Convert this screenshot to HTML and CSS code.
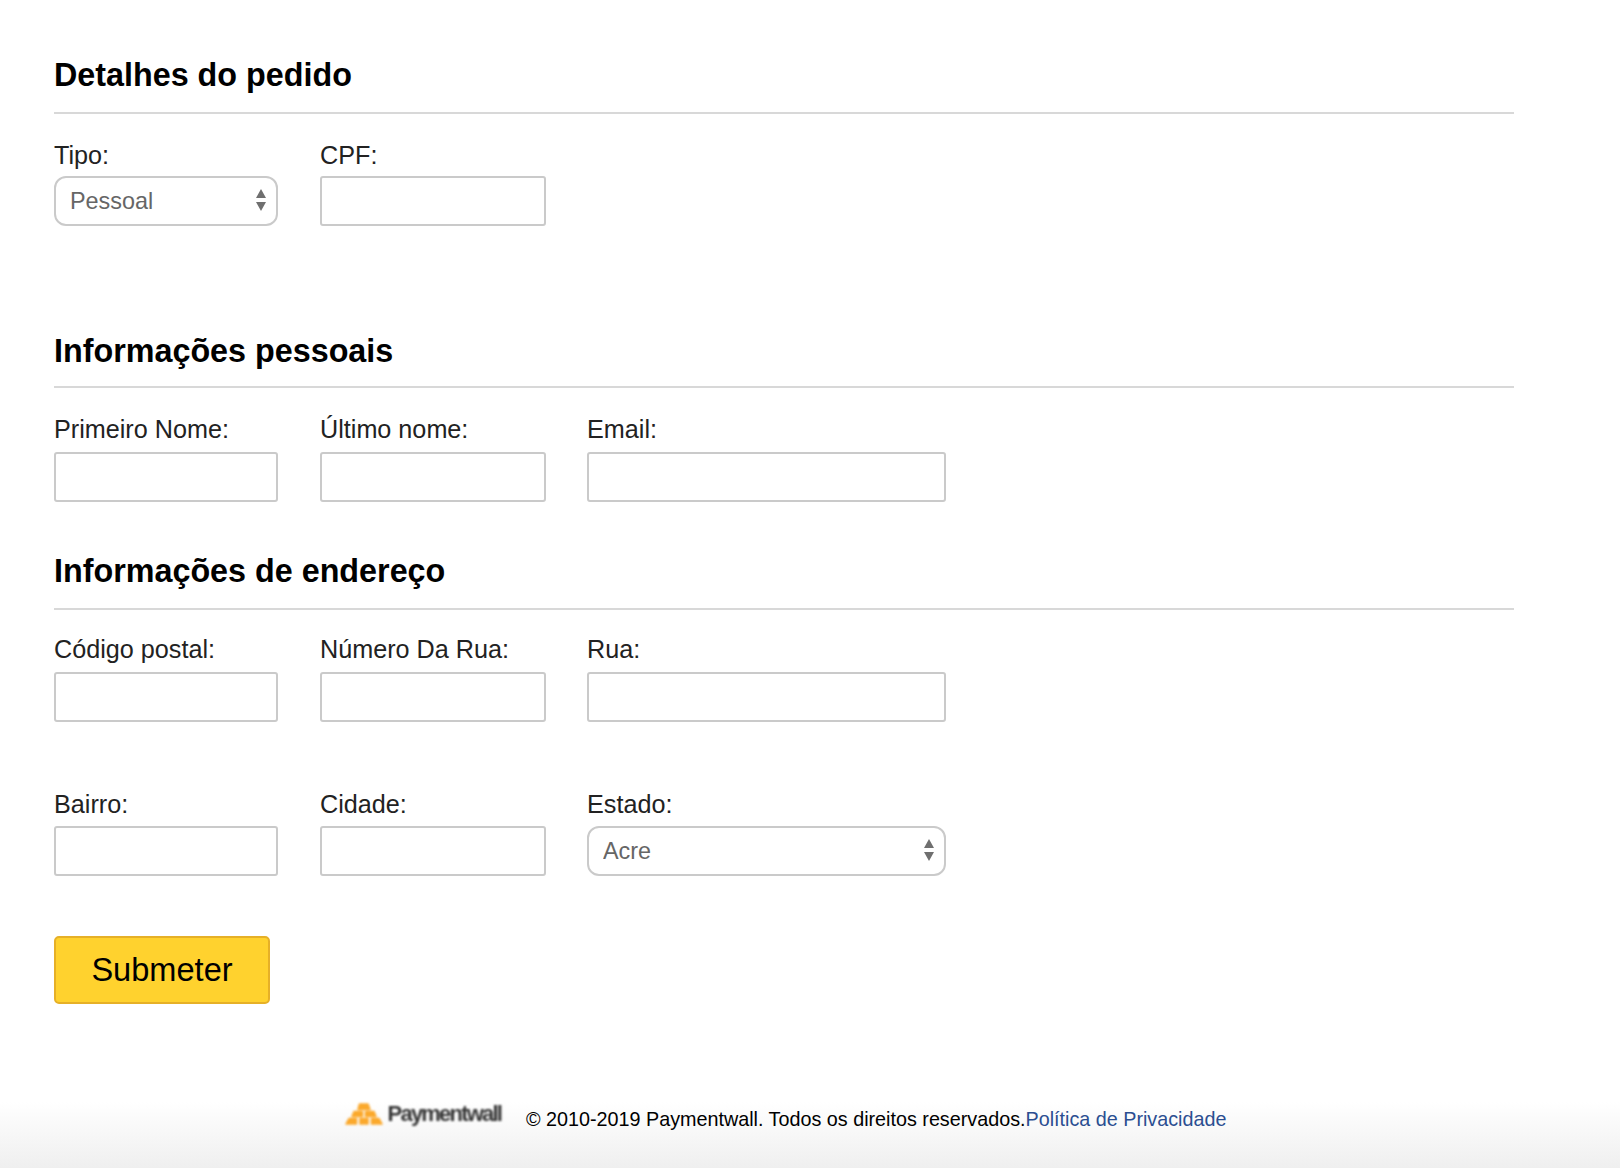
FILE: index.html
```html
<!DOCTYPE html>
<html lang="pt">
<head>
  <meta charset="UTF-8" />
  <title>Detalhes do pedido</title>
  <link rel="stylesheet" href="styles.css">
</head>
<body>

  <form class="order-form">
    <section class="details">
      <h2>Detalhes do pedido</h2>
      <div class="row">
        <div class="field small">
          <label for="tipo">Tipo:</label>
          <div class="select-wrap">
            <select id="tipo"><option>Pessoal</option></select>
            <svg class="arrows" width="12" height="24" viewBox="0 0 12 24"><path d="M6 1 L11 10 L1 10 Z M1 14 L11 14 L6 23 Z" fill="#6f6f6f"/></svg>
          </div>
        </div>
        <div class="field small second">
          <label for="cpf">CPF:</label>
          <input id="cpf" type="text">
        </div>
      </div>
    </section>

    <section class="personal">
      <h2>Informações pessoais</h2>
      <div class="row">
        <div class="field small">
          <label for="nome">Primeiro Nome:</label>
          <input id="nome" type="text">
        </div>
        <div class="field small second">
          <label for="sobrenome">Último nome:</label>
          <input id="sobrenome" type="text">
        </div>
        <div class="field wide">
          <label for="email">Email:</label>
          <input id="email" type="text">
        </div>
      </div>
    </section>

    <section class="address">
      <h2>Informações de endereço</h2>
      <div class="row">
        <div class="field small">
          <label for="cep">Código postal:</label>
          <input id="cep" type="text">
        </div>
        <div class="field small second">
          <label for="numero">Número Da Rua:</label>
          <input id="numero" type="text">
        </div>
        <div class="field wide">
          <label for="rua">Rua:</label>
          <input id="rua" type="text">
        </div>
      </div>
      <div class="row next">
        <div class="field small">
          <label for="bairro">Bairro:</label>
          <input id="bairro" type="text">
        </div>
        <div class="field small second">
          <label for="cidade">Cidade:</label>
          <input id="cidade" type="text">
        </div>
        <div class="field wide">
          <label for="estado">Estado:</label>
          <div class="select-wrap">
            <select id="estado"><option>Acre</option></select>
            <svg class="arrows" width="12" height="24" viewBox="0 0 12 24"><path d="M6 1 L11 10 L1 10 Z M1 14 L11 14 L6 23 Z" fill="#6f6f6f"/></svg>
          </div>
        </div>
      </div>
    </section>

    <button class="btn" type="button">Submeter</button>
  </form>

  <footer class="footer">
    <div class="brand">
      <svg class="logo" width="38" height="22" viewBox="0 0 38 22">
        <g fill="#fba92c" stroke="#fba92c" stroke-width="1.5" stroke-linejoin="round">
          <path d="M14.5 1 H23 L25 6.5 H13 Z"/>
          <path d="M9 8.5 H17.5 L17.5 13.5 H7 Z"/>
          <path d="M20.5 8.5 H29 L31 13.5 H20.5 Z"/>
          <path d="M4 15.5 H11.5 L11.5 21 H1 Z"/>
          <path d="M15 15.5 H23 L23 21 H15 Z"/>
          <path d="M26.5 15.5 H34 L37 21 H26.5 Z"/>
        </g>
      </svg>
      <span class="brand-name">Paymentwall</span>
    </div>
    <p class="copy">© 2010-2019 Paymentwall. Todos os direitos reservados.<a href="#">Política de Privacidade</a></p>
  </footer>

</body>
</html>
```

FILE: styles.css
```css
* {
  box-sizing: border-box;
}

html, body {
  height: 100%;
}

body {
  margin: 0;
  font-family: "Liberation Sans", Arial, sans-serif;
  color: #222;
  background: #fff;
  display: flex;
  flex-direction: column;
  min-height: 1168px;
}

.order-form {
  padding: 52px 0 0 54px;
  width: 1514px;
  flex: 1;
}

h2 {
  margin: 0;
  font-size: 32.3px;
  line-height: 46px;
  font-weight: bold;
  color: #000;
  border-bottom: 2px solid #d8d8d8;
  padding-bottom: 14px;
}

.row {
  display: flex;
  margin-top: 24px;
}

.row.next {
  margin-top: 67px;
}

.field {
  display: flex;
  flex-direction: column;
  margin-right: 42px;
}

.field.small {
  width: 224px;
}

.field.second {
  width: 226px;
  margin-right: 41px;
}

.field.wide {
  width: 359px;
  margin-right: 0;
}

label {
  font-size: 25.2px;
  line-height: 30px;
  margin-bottom: 8px;
}

.row.next label {
  margin-bottom: 7px;
}

input, select {
  width: 100%;
  height: 50px;
  border: 2px solid #cacaca;
  background: #fff;
  font-family: inherit;
  font-size: 23.4px;
  color: #666;
}

input {
  border-radius: 3px;
  padding: 0 14px;
}

select {
  appearance: none;
  border-radius: 12px;
  padding: 0 14px;
}

.select-wrap {
  position: relative;
}

.arrows {
  position: absolute;
  right: 11px;
  top: 12px;
}

.details {
  height: 276px;
}

.details .row {
  margin-top: 26px;
}

.details label {
  margin-bottom: 6px;
}

.personal {
  height: 220px;
}

.personal h2 {
  padding-bottom: 12px;
}

.personal .row {
  margin-top: 26px;
}

.btn {
  display: block;
  margin-top: 60px;
  width: 216px;
  height: 68px;
  background: #ffd22e;
  border: 2px solid #e6b027;
  border-radius: 5px;
  font-family: inherit;
  font-size: 32.6px;
  color: #000;
}

.footer {
  height: 88px;
  display: flex;
  align-items: flex-start;
  justify-content: center;
  padding: 20px 49px 0 0;
  background: linear-gradient(#fff 25%, #efefef);
}

.brand {
  display: flex;
  align-items: center;
  gap: 5px;
  filter: blur(0.8px);
}

.brand-name {
  font-size: 22px;
  font-weight: bold;
  letter-spacing: -1.8px;
  color: #333;
  margin-top: 1px;
}

.copy {
  margin: 8px 0 0 25px;
  font-size: 19.76px;
  color: #000;
}

.copy a {
  color: #2b4e91;
  text-decoration: none;
}
```
